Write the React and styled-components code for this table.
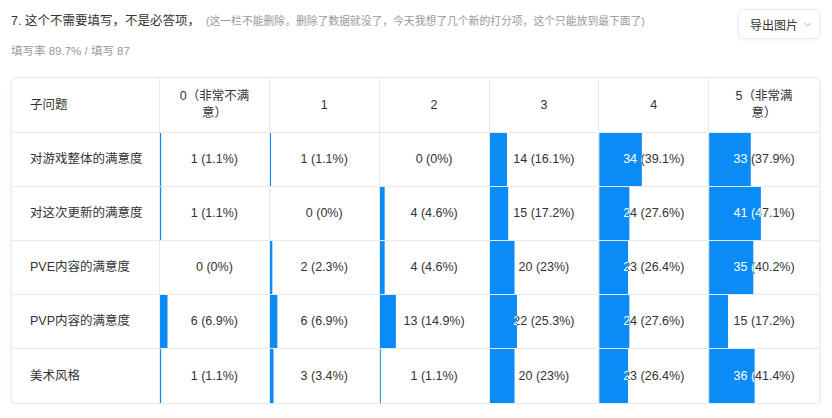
import React from "react";
import styled, { createGlobalStyle } from "styled-components";

const Global = createGlobalStyle`
  html, body { margin: 0; padding: 0; background: #fff; }
  body {
    font-family: "Liberation Sans", "Noto Sans CJK SC", sans-serif;
    color: #333;
  }
`;

const Page = styled.div`
  width: 832px;
  box-sizing: border-box;
  padding: 9px 12px 0 11px;
`;

const Header = styled.div`
  display: flex;
  justify-content: space-between;
  align-items: flex-start;
`;

const TitleBlock = styled.div`
  display: flex;
  flex-direction: column;
`;

const Title = styled.div`
  font-size: 12.5px;
  line-height: 25px;
  color: #333;
  white-space: nowrap;
`;

const Note = styled.span`
  font-size: 10.8px;
  color: #999;
  margin-left: 6px;
`;

const Stats = styled.div`
  margin-top: 9px;
  font-size: 11.5px;
  line-height: 16px;
  color: #999;
`;

const ExportButton = styled.button`
  display: flex;
  align-items: center;
  gap: 5px;
  height: 30px;
  width: 82px;
  padding: 0 0 0 11px;
  box-sizing: border-box;
  border: 1px solid #e8eaee;
  border-radius: 6px;
  background: #fff;
  box-shadow: 0 1px 4px rgba(0, 0, 0, 0.06);
  font-family: inherit;
  font-size: 12px;
  color: #333;
  cursor: pointer;
`;

const Card = styled.div`
  margin-top: 18px;
  width: 809px;
  border: 1px solid #e6e9ee;
  border-radius: 4px;
  box-shadow: 0 2px 6px rgba(0, 0, 0, 0.06);
  overflow: hidden;
  display: grid;
  grid-template-columns: 148px repeat(6, 1fr);
  box-sizing: border-box;
`;

const Cell = styled.div`
  position: relative;
  height: ${(p) => (p.$head ? 55 : 54)}px;
  box-sizing: border-box;
  border-bottom: ${(p) => (p.$last ? "none" : "1px solid #e6e9ee")};
  border-right: ${(p) => (p.$lastCol ? "none" : "1px solid #e6e9ee")};
  display: flex;
  align-items: center;
  justify-content: ${(p) => (p.$label ? "flex-start" : "center")};
  padding: ${(p) => (p.$label ? "0 0 0 18px" : "0 16px")};
  text-align: center;
  white-space: pre-line;
  font-size: 12.5px;
  line-height: 17px;
  color: #333;
`;

const Bar = styled.div`
  position: absolute;
  inset: 0;
  background: #0b8bf5;
  color: #fff;
  display: flex;
  align-items: center;
  justify-content: center;
  font-size: 12.5px;
`;

const Chevron = () => (
  <svg width="9" height="9" viewBox="0 0 10 10" fill="none">
    <path d="M1.5 3.2 L5 6.7 L8.5 3.2" stroke="#aaa" strokeWidth="1.1" />
  </svg>
);

const headers = ["0（非常不满\n意）", "1", "2", "3", "4", "5（非常满\n意）"];

const rows = [
  ["对游戏整体的满意度", [[1, 1.1], [1, 1.1], [0, 0], [14, 16.1], [34, 39.1], [33, 37.9]]],
  ["对这次更新的满意度", [[1, 1.1], [0, 0], [4, 4.6], [15, 17.2], [24, 27.6], [41, 47.1]]],
  ["PVE内容的满意度", [[0, 0], [2, 2.3], [4, 4.6], [20, 23], [23, 26.4], [35, 40.2]]],
  ["PVP内容的满意度", [[6, 6.9], [6, 6.9], [13, 14.9], [22, 25.3], [24, 27.6], [15, 17.2]]],
  ["美术风格", [[1, 1.1], [3, 3.4], [1, 1.1], [20, 23], [23, 26.4], [36, 41.4]]],
];

export default function App() {
  return (
    <Page>
      <Global />
      <Header>
        <TitleBlock>
          <Title>
            7. 这个不需要填写，不是必答项，
            <Note>(这一栏不能删除，删除了数据就没了，今天我想了几个新的打分项，这个只能放到最下面了)</Note>
          </Title>
          <Stats>填写率 89.7% / 填写 87</Stats>
        </TitleBlock>
        <ExportButton>
          导出图片
          <Chevron />
        </ExportButton>
      </Header>
      <Card>
        <Cell $head $label>子问题</Cell>
        {headers.map((h, i) => (
          <Cell key={h} $head $lastCol={i === 5}>{h}</Cell>
        ))}
        {rows.map(([label, vals], r) => (
          <React.Fragment key={label}>
            <Cell $label $last={r === rows.length - 1}>{label}</Cell>
            {vals.map(([n, pct], c) => {
              const text = `${n} (${pct}%)`;
              return (
                <Cell key={c} $last={r === rows.length - 1} $lastCol={c === 5}>
                  {text}
                  {pct > 0 && (
                    <Bar style={{ clipPath: `inset(0 ${100 - pct}% 0 0)` }}>{text}</Bar>
                  )}
                </Cell>
              );
            })}
          </React.Fragment>
        ))}
      </Card>
    </Page>
  );
}
